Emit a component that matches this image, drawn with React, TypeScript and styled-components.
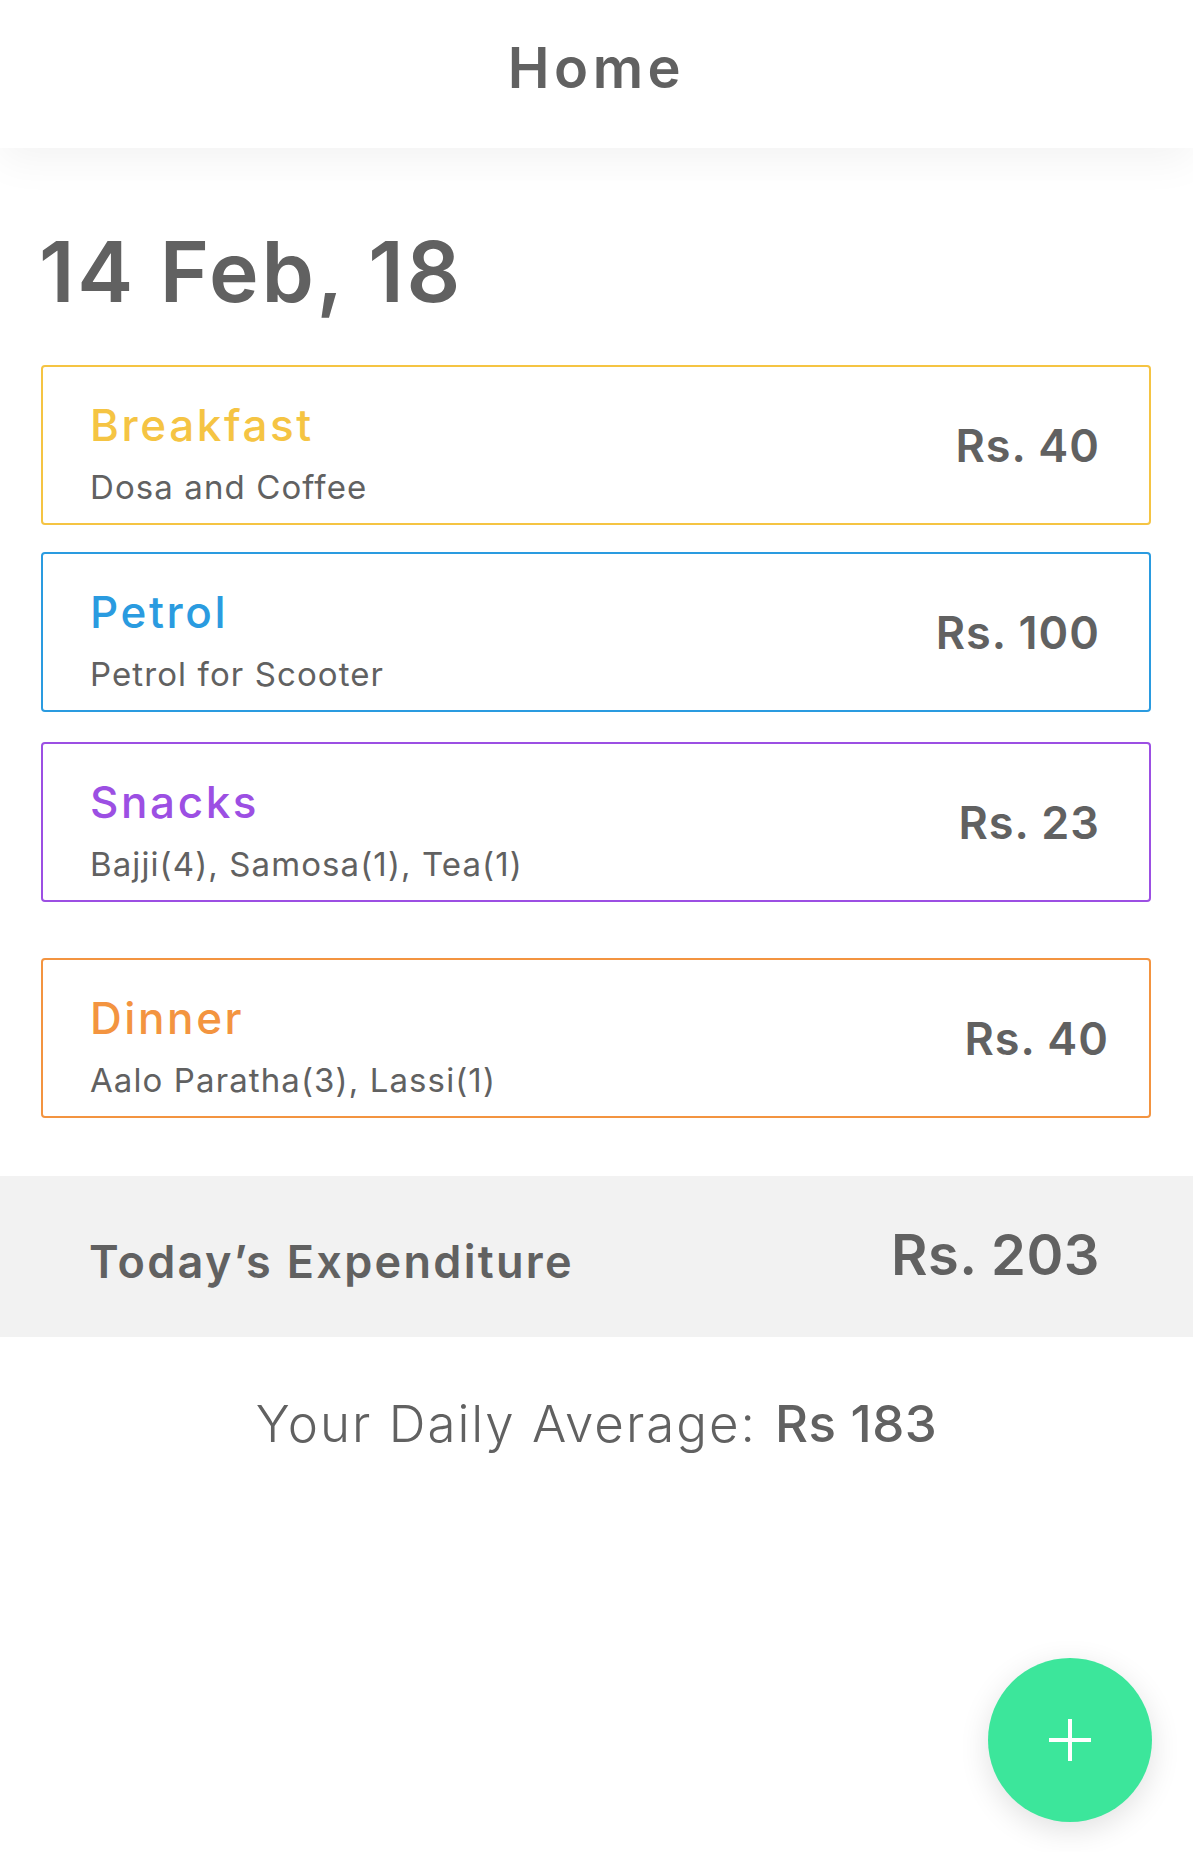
import React from "react";
import styled, { createGlobalStyle } from "styled-components";

const Global = createGlobalStyle`
  html, body { margin: 0; padding: 0; background: #ffffff; }
  body { font-family: Inter, "Liberation Sans", sans-serif; color: #616161; }
  * { box-sizing: border-box; }
`;

const Page = styled.div`
  position: relative;
  min-height: 1852px;
  background: #ffffff;
`;

const Header = styled.header`
  height: 148px;
  padding-top: 40px;
  display: flex;
  justify-content: center;
  align-items: flex-start;
  background: #ffffff;
  box-shadow: 0 12px 40px rgba(0, 0, 0, 0.05);
  position: relative;
  z-index: 1;
`;

const Title = styled.h1`
  margin: 0;
  font-size: 56px;
  line-height: 1;
  font-weight: 600;
  color: #616161;
  letter-spacing: 4.5px;
`;

const Content = styled.main`
  padding: 82px 42px 0 41px;
  display: flex;
  flex-direction: column;
`;

const DateHeading = styled.h2`
  margin: 0 0 51px -2px;
  font-size: 84px;
  line-height: 1;
  font-weight: 600;
  color: #616161;
  letter-spacing: 2.7px;
`;

const Card = styled.div<{ $color: string; $gap: number }>`
  height: 160px;
  border: 2px solid ${(p) => p.$color};
  border-radius: 4px;
  display: flex;
  justify-content: space-between;
  align-items: center;
  padding: 0 49px 0 47px;
  margin-bottom: ${(p) => p.$gap}px;
`;

const CardText = styled.div`
  padding-top: 16px;
  display: flex;
  flex-direction: column;
  gap: 24px;
`;

const CardTitle = styled.div<{ $color: string }>`
  font-size: 44px;
  line-height: 1;
  font-weight: 500;
  color: ${(p) => p.$color};
  letter-spacing: 2.6px;
`;

const CardSub = styled.div`
  font-size: 33px;
  line-height: 1;
  font-weight: 400;
  color: #616161;
  letter-spacing: 1.1px;
`;

const Amount = styled.div<{ $shift: number }>`
  font-size: 45px;
  line-height: 1;
  font-weight: 600;
  color: #616161;
  letter-spacing: 1px;
  margin-right: ${(p) => p.$shift}px;
`;

const TotalBand = styled.section`
  height: 161px;
  background: #f2f2f2;
  display: flex;
  justify-content: space-between;
  align-items: center;
  padding: 0 93px 0 89px;
`;

const TotalLabel = styled.div`
  font-size: 45px;
  line-height: 1;
  font-weight: 600;
  color: #616161;
  letter-spacing: 2.3px;
  margin-top: 10px;
`;

const TotalAmount = styled.div`
  font-size: 56px;
  line-height: 1;
  font-weight: 600;
  color: #616161;
  letter-spacing: 0.5px;
  margin-bottom: 4px;
`;

const Average = styled.p`
  margin: 61px 0 0 0;
  text-align: center;
  font-size: 51px;
  line-height: 1;
  font-weight: 300;
  color: #616161;
  letter-spacing: 2px;
`;

const AverageValue = styled.span`
  font-weight: 500;
  margin-left: 18px;
  letter-spacing: 0.5px;
`;

const Fab = styled.button`
  position: fixed;
  right: 41px;
  bottom: 30px;
  width: 164px;
  height: 164px;
  border-radius: 50%;
  border: none;
  background: #3ce69b;
  box-shadow: 0 8px 30px rgba(0, 0, 0, 0.12);
  display: flex;
  align-items: center;
  justify-content: center;
  padding: 0;
  cursor: pointer;
`;

const expenses = [
  { title: "Breakfast", sub: "Dosa and Coffee", amount: "Rs. 40", color: "#f5c443", gap: 27, shift: 0 },
  { title: "Petrol", sub: "Petrol for Scooter", amount: "Rs. 100", color: "#2a9be0", gap: 30, shift: 0 },
  { title: "Snacks", sub: "Bajji(4), Samosa(1), Tea(1)", amount: "Rs. 23", color: "#9c4fe3", gap: 56, shift: 0 },
  { title: "Dinner", sub: "Aalo Paratha(3), Lassi(1)", amount: "Rs. 40", color: "#f39440", gap: 58, shift: -9 },
];

export default function App() {
  return (
    <Page>
      <Global />
      <Header>
        <Title>Home</Title>
      </Header>
      <Content>
        <DateHeading>14 Feb, 18</DateHeading>
        {expenses.map((e) => (
          <Card key={e.title} $color={e.color} $gap={e.gap}>
            <CardText>
              <CardTitle $color={e.color}>{e.title}</CardTitle>
              <CardSub>{e.sub}</CardSub>
            </CardText>
            <Amount $shift={e.shift}>{e.amount}</Amount>
          </Card>
        ))}
      </Content>
      <TotalBand>
        <TotalLabel>Today’s Expenditure</TotalLabel>
        <TotalAmount>Rs. 203</TotalAmount>
      </TotalBand>
      <Average>
        Your Daily Average:<AverageValue>Rs 183</AverageValue>
      </Average>
      <Fab aria-label="Add expense">
        <svg width="42" height="42" viewBox="0 0 42 42">
          <rect x="19" y="0" width="4" height="42" fill="#ffffff" />
          <rect x="0" y="19" width="42" height="4" fill="#ffffff" />
        </svg>
      </Fab>
    </Page>
  );
}
